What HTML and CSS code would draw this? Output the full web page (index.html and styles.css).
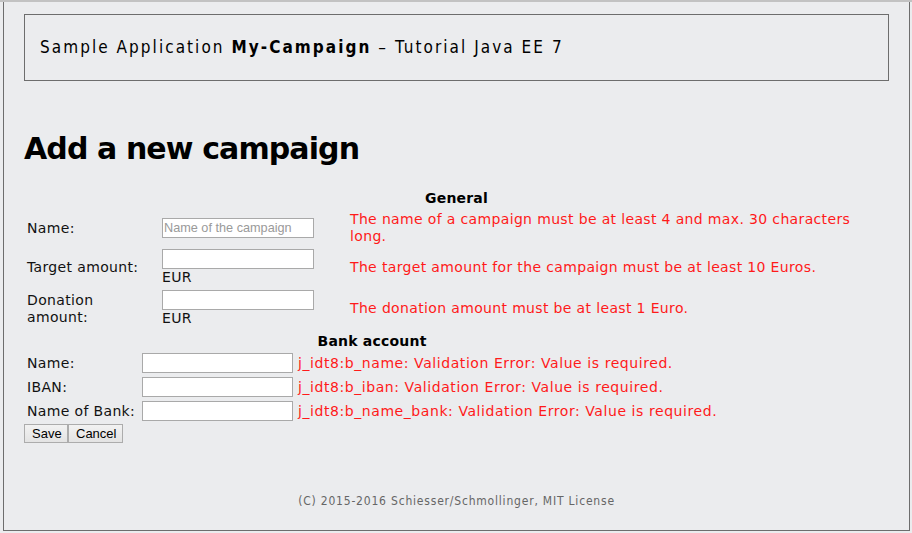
FILE: index.html
```html
<!DOCTYPE html>
<html>
<head>
<meta charset="utf-8">
<title>My-Campaign</title>
<link rel="stylesheet" href="styles.css">
</head>
<body>
<div class="page">
  <div class="header">
    <span>Sample Application <b>My-Campaign</b> – Tutorial Java EE 7</span>
  </div>
  <h1 class="title">Add a new campaign</h1>
  <form class="form">
    <div class="grid general">
      <div class="caption">General</div>
      <label class="lbl">Name:</label>
      <div class="field"><input type="text" class="inp" placeholder="Name of the campaign"></div>
      <div class="msg">The name of a campaign must be at least 4 and max. 30 characters long.</div>

      <label class="lbl">Target amount:</label>
      <div class="field"><input type="text" class="inp"><span class="unit">EUR</span></div>
      <div class="msg">The target amount for the campaign must be at least 10 Euros.</div>

      <label class="lbl">Donation<br>amount:</label>
      <div class="field"><input type="text" class="inp"><span class="unit">EUR</span></div>
      <div class="msg">The donation amount must be at least 1 Euro.</div>
    </div>

    <div class="grid bank">
      <div class="caption">Bank account</div>
      <label class="lbl">Name:</label>
      <div class="field"><input type="text" class="inp bank-inp"></div>
      <div class="msg">j_idt8:b_name: Validation Error: Value is required.</div>

      <label class="lbl">IBAN:</label>
      <div class="field"><input type="text" class="inp bank-inp"></div>
      <div class="msg">j_idt8:b_iban: Validation Error: Value is required.</div>

      <label class="lbl">Name of Bank:</label>
      <div class="field"><input type="text" class="inp bank-inp"></div>
      <div class="msg">j_idt8:b_name_bank: Validation Error: Value is required.</div>
    </div>

    <div class="buttons">
      <button type="button" class="btn btn-save">Save</button>
      <button type="button" class="btn btn-cancel">Cancel</button>
    </div>
  </form>
  <div class="footer">(C) 2015-2016 Schiesser/Schmollinger, MIT License</div>
</div>
</body>
</html>
```
FILE: styles.css
```css
html, body {
  margin: 0;
  padding: 0;
  height: 533px;
  background: #ebecee;
  overflow: hidden;
}
body {
  box-sizing: border-box;
  border-top: 2px solid #c2c2c2;
  font-family: "DejaVu Sans", Verdana, sans-serif;
  font-size: 14px;
  letter-spacing: 0.35px;
  color: #111;
}
.page {
  box-sizing: border-box;
  margin: 0 2px 0 3px;
  height: 529px;
  border: 1px solid #6d6d6d;
  border-top: none;
  padding: 0 20px;
  display: flex;
  flex-direction: column;
}
.header {
  box-sizing: border-box;
  margin-top: 12px;
  height: 67px;
  border: 1px solid #6d6d6d;
  padding-left: 15px;
  padding-bottom: 1px;
  display: flex;
  align-items: center;
  font-family: "DejaVu Sans Condensed", "DejaVu Sans", sans-serif;
  font-size: 17px;
  letter-spacing: 2.05px;
  color: #000;
}
.title {
  margin: 50px 0 0 0;
  font-size: 30px;
  letter-spacing: -0.9px;
  line-height: 36px;
  font-weight: bold;
  color: #000;
}
.form {
  margin-top: 20px;
}
.grid {
  display: grid;
  row-gap: 4px;
  column-gap: 4px;
  padding: 3px;
  line-height: 17px;
  align-items: center;
}
.general {
  grid-template-columns: 131px 184px 1fr;
}
.bank {
  grid-template-columns: 111px 152px auto;
  width: max-content;
  margin-top: 0;
  padding-bottom: 0;
}
.bank .caption {
  margin-bottom: -1px;
}
.bank .msg {
  letter-spacing: 0.57px;
}
.caption {
  grid-column: 1 / -1;
  text-align: center;
  font-weight: bold;
  letter-spacing: 0.2px;
  color: #000;
}
.lbl {
  color: #111;
}
.field {
  display: flex;
  flex-direction: column;
  align-items: flex-start;
}
.inp {
  box-sizing: border-box;
  width: 152px;
  height: 20px;
  margin: 0;
  padding: 1px;
  border: 1px solid #a9a9a9;
  background: #fff;
  font-family: "Liberation Sans", Arial, sans-serif;
  font-size: 12.7px;
  letter-spacing: 0;
}
.inp::placeholder {
  color: #9a9a9a;
}
.bank-inp {
  width: 151px;
}
.unit {
  color: #111;
}
.msg {
  color: #ff1a1a;
}
.buttons {
  display: flex;
  margin-top: 3px;
}
.btn {
  box-sizing: border-box;
  height: 19px;
  margin: 0;
  padding: 0 7px;
  border: 1px solid #acacac;
  border-radius: 0;
  background: linear-gradient(#f2f2f2, #e3e3e3);
  font-family: "Liberation Sans", Arial, sans-serif;
  font-size: 13px;
  letter-spacing: 0;
  line-height: 17px;
  color: #000;
}
.btn-save {
  width: 44px;
}
.btn-cancel {
  width: 55px;
}
.footer {
  margin-top: auto;
  margin-bottom: 22px;
  text-align: center;
  font-family: "DejaVu Sans Condensed", "DejaVu Sans", sans-serif;
  font-size: 12px;
  letter-spacing: 0.8px;
  line-height: 14px;
  color: #666;
}
```
